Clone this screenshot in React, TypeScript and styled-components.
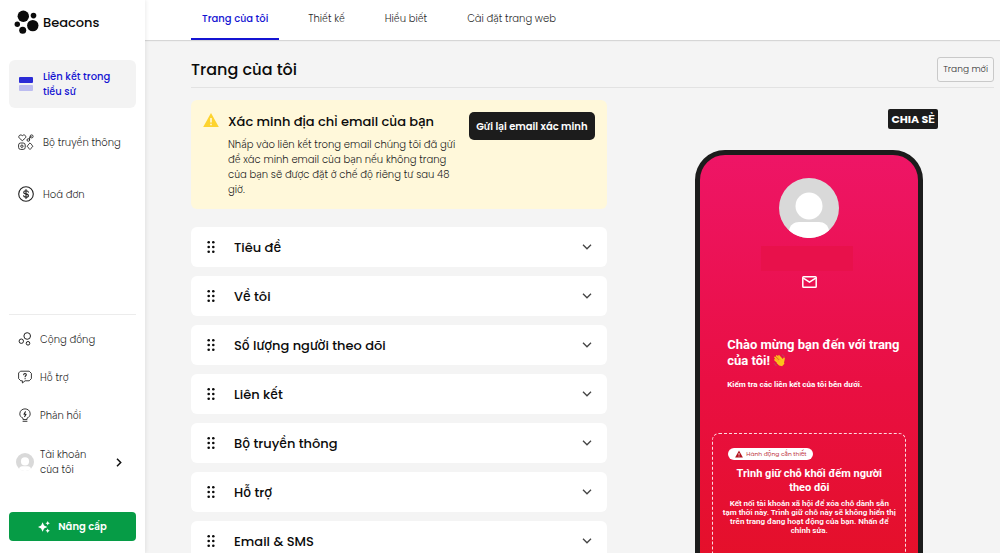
import React from "react";
import styled, { createGlobalStyle } from "styled-components";

const GlobalStyle = createGlobalStyle`
  *, *::before, *::after { box-sizing: border-box; }
  body {
    margin: 0;
    background: #f4f4f4;
    color: #0b0b0b;
    font-family: Poppins, Inter, "Noto Sans", sans-serif;
    font-size: 10px;
    line-height: 15px;
  }
  button { font: inherit; color: inherit; cursor: pointer; }
  a { color: inherit; text-decoration: none; }
  h1, h2, h3, p, ul { margin: 0; padding: 0; }
  svg { display: block; flex: none; }
`;

const Shell = styled.div`
  display: flex;
  height: 100vh;
  overflow: hidden;
`;

const Sidebar = styled.aside`
  position: relative;
  z-index: 2;
  display: flex;
  flex: none;
  flex-direction: column;
  width: 145px;
  padding: 9px 9px 12px;
  background: #fff;
  box-shadow: 1px 0 4px rgba(0, 0, 0, 0.08);
`;

const Brand = styled.a`
  display: flex;
  align-items: center;
  gap: 4px;
  height: 26px;
  margin-bottom: 25px;
  padding-left: 5px;
  font-size: 13px;
  font-weight: 500;
`;

const PrimaryNav = styled.nav`
  display: flex;
  flex-direction: column;
`;

const NavItem = styled.a<{ $active?: boolean }>`
  display: flex;
  align-items: center;
  gap: 9px;
  width: 127px;
  height: ${(p) => (p.$active ? "48px" : "52px")};
  margin-bottom: ${(p) => (p.$active ? "8px" : "0")};
  padding: 0 9px;
  border-radius: 6px;
  background: ${(p) => (p.$active ? "#f3f3f3" : "transparent")};
  color: ${(p) => (p.$active ? "#1414d2" : "#2a2a2a")};
  font-weight: ${(p) => (p.$active ? 500 : 300)};
`;

const NavLabel = styled.span`
  flex: 1;
`;

const SecondaryNav = styled.nav`
  display: flex;
  flex-direction: column;
  width: 127px;
  margin-top: auto;
  margin-bottom: 22px;
  padding-top: 5px;
  border-top: 1px solid #ececec;
`;

const SubItem = styled.a<{ $tall?: boolean }>`
  display: flex;
  align-items: center;
  gap: 7px;
  height: ${(p) => (p.$tall ? "56px" : "38px")};
  padding: 0 14px 0 8px;
  color: #2a2a2a;
  font-weight: 300;
`;

const IconSlot = styled.span`
  display: flex;
  flex: none;
  align-items: center;
  justify-content: center;
  width: 16px;
`;

const UpgradeButton = styled.button`
  display: flex;
  align-items: center;
  justify-content: center;
  gap: 8px;
  width: 127px;
  height: 29px;
  border: 0;
  border-radius: 4px;
  background: #069c46;
  color: #fff;
  font-weight: 600;
`;

const Page = styled.div`
  display: flex;
  flex: 1;
  flex-direction: column;
  min-width: 0;
`;

const TabBar = styled.nav`
  display: flex;
  flex: none;
  gap: 18px;
  height: 40px;
  padding-left: 46px;
  background: #fff;
  box-shadow: 0 1px 1px rgba(0, 0, 0, 0.12);
`;

const Tab = styled.a<{ $active?: boolean }>`
  display: flex;
  align-items: center;
  padding: 0 11px 2px;
  border-bottom: 2px solid ${(p) => (p.$active ? "#1414d2" : "transparent")};
  color: ${(p) => (p.$active ? "#1414d2" : "#2a2a2a")};
  font-weight: ${(p) => (p.$active ? 500 : 300)};
`;

const Content = styled.main`
  flex: 1;
  padding: 17px 6px 0 46px;
  overflow: hidden;
`;

const TitleRow = styled.header`
  display: flex;
  align-items: center;
  justify-content: space-between;
  height: 31px;
  padding-bottom: 5px;
  border-bottom: 1px solid #e2e2e2;
`;

const PageTitle = styled.h1`
  font-size: 16px;
  font-weight: 500;
  line-height: 24px;
`;

const NewPageButton = styled.button`
  height: 25px;
  padding: 0 5px;
  border: 1px solid #c9c9c9;
  border-radius: 3px;
  background: #f6f6f6;
  color: #333;
  font-size: 9px;
  font-weight: 300;
`;

const Columns = styled.div`
  display: grid;
  grid-template-columns: 9fr 8fr;
  gap: 18px;
  padding-top: 12px;
`;

const Notice = styled.section`
  display: flex;
  align-items: flex-start;
  gap: 9px;
  min-height: 109px;
  margin-bottom: 18px;
  padding: 12px 12px 10px;
  border-radius: 6px;
  background: #fff8da;
`;

const NoticeText = styled.div`
  flex: 1;
  min-width: 0;
`;

const NoticeTitle = styled.h2`
  margin-bottom: 5px;
  font-size: 13px;
  font-weight: 500;
  line-height: 20px;
  white-space: nowrap;
`;

const NoticeBody = styled.p`
  max-width: 230px;
  color: #222;
  font-weight: 300;
`;

const ResendButton = styled.button`
  flex: none;
  height: 28px;
  padding: 0 7px;
  border: 0;
  border-radius: 5px;
  background: #1c1c1c;
  color: #fff;
  font-weight: 600;
`;

const BlockList = styled.ul`
  display: flex;
  flex-direction: column;
  gap: 9px;
  list-style: none;
`;

const BlockButton = styled.button`
  display: flex;
  align-items: center;
  width: 100%;
  height: 40px;
  padding: 0 15px;
  border: 0;
  border-radius: 6px;
  background: #fff;
  text-align: left;
`;

const BlockLabel = styled.span`
  flex: 1;
  padding-left: 18px;
  font-size: 13px;
  font-weight: 500;
`;

const Preview = styled.section`
  display: flex;
  flex-direction: column;
  align-items: center;
  padding-top: 9px;
`;

const ShareButton = styled.button`
  align-self: flex-end;
  height: 20px;
  margin: 0 56px 21px 0;
  padding: 0 3px;
  border: 0;
  border-radius: 2px;
  background: #1c1c1c;
  color: #fff;
  font-size: 11px;
  font-weight: 700;
`;

const Phone = styled.div`
  display: flex;
  flex-direction: column;
  align-items: center;
  width: 228px;
  min-height: 470px;
  padding: 23px 12px 0;
  border: 5px solid #1c1c1c;
  border-radius: 30px;
  background: linear-gradient(#ee1566, #e90f42 50%, #e31022);
  color: #fff;
  font-family: Roboto, sans-serif;
`;

const NamePlate = styled.div`
  width: 92px;
  height: 25px;
  margin: 8px 4px 5px 0;
  background: #e8114b;
`;

const Welcome = styled.div`
  align-self: stretch;
  margin: 49px 0 42px;
  padding: 0 4px 0 15px;
`;

const WelcomeTitle = styled.h2`
  margin-bottom: 10px;
  font-size: 13px;
  font-weight: 700;
  line-height: 16px;

  svg { display: inline-block; vertical-align: -2px; }
`;

const WelcomeText = styled.p`
  font-size: 8px;
  font-weight: 700;
  line-height: 12px;
`;

const Placeholder = styled.div`
  align-self: stretch;
  flex: 1;
  padding: 14px 9px;
  border: 1px dashed rgba(255, 255, 255, 0.85);
  border-radius: 7px;
  text-align: center;
`;

const ActionBadge = styled.span`
  display: flex;
  align-items: center;
  gap: 3px;
  width: fit-content;
  height: 12px;
  margin: 0 0 7px 6px;
  padding: 0 6px 0 7px;
  border-radius: 6px;
  background: #fff;
  color: #c0353f;
  font-family: Poppins, Inter, sans-serif;
  font-size: 6px;
  font-weight: 400;
`;

const PlaceholderTitle = styled.h3`
  margin-bottom: 4px;
  padding: 0 6px;
  font-size: 11px;
  font-weight: 700;
  line-height: 14px;
`;

const PlaceholderText = styled.p`
  font-size: 8px;
  font-weight: 600;
  line-height: 9px;
`;

const LogoIcon = () => (
  <svg width="25" height="26" viewBox="0 0 25 26" fill="#0b0b0b">
    <circle cx="9.3" cy="7.3" r="5.7" />
    <circle cx="19.5" cy="6.6" r="2.8" />
    <circle cx="3.3" cy="15.2" r="2.7" />
    <circle cx="18.8" cy="16.6" r="5.7" />
    <circle cx="8.7" cy="21.2" r="3.5" />
  </svg>
);

const BioIcon = () => (
  <svg width="16" height="16" viewBox="0 0 16 16">
    <rect x="1" y="1" width="14" height="6" rx="1" fill="#2b2bd6" />
    <rect x="1" y="9" width="14" height="6" rx="1" fill="#bcbcf0" />
  </svg>
);

const MediaKitIcon = () => (
  <svg width="16" height="16" viewBox="0 0 16 16" fill="none" stroke="#222" strokeWidth="0.9" strokeLinejoin="round">
    <path d="M4.300 6.700 1.300 4.100C-.4 2.400 2.300-.5 4.300 1.700 6.300-.5 9 2.400 7.300 4.100Z" />
    <circle cx="10.300" cy="6" r="1.300" />
    <path d="M11.600 6V3.200l2-.8" />
    <circle cx="13.600" cy="2.400" r="1.500" />
    <rect x=".6" y="9" width="6.600" height="6.400" rx="2" />
    <circle cx="3.900" cy="12.200" r="1.200" />
    <path d="M12 8.900 13.300 10.200C13.600 11 14.200 11.400 14.900 12.200 14.200 13 13.600 13.400 13.300 14.200L12 15.500 10.700 14.200C10.400 13.400 9.800 13 9.100 12.200 9.800 11.400 10.400 11 10.700 10.200Z" />
  </svg>
);

const DollarIcon = () => (
  <svg width="16" height="16" viewBox="0 0 16 16" fill="none" stroke="#222" strokeWidth="1.100" strokeLinecap="round">
    <circle cx="8" cy="8" r="7.300" />
    <path d="M10.400 6.100C10.100 5 9.200 4.700 8 4.700c-3 0-3.100 2.900-.3 3.200 3.700.3 3.400 3.400.3 3.400-1.300 0-2.300-.5-2.500-1.600M8 3.500v9" />
  </svg>
);

const CommunityIcon = () => (
  <svg width="14" height="14" viewBox="0 0 14 14" fill="none" stroke="#222" strokeWidth="1">
    <circle cx="9.200" cy="4" r="3.300" />
    <circle cx="3.300" cy="9.200" r="2.200" />
    <circle cx="10" cy="11.300" r="1.800" />
  </svg>
);

const SupportIcon = () => (
  <svg width="14" height="14" viewBox="0 0 14 14" fill="none" stroke="#222" strokeWidth="0.900" strokeLinejoin="round" strokeLinecap="round">
    <path d="M2.800 1.200h8.400l2.200 2.200v5.200l-2.200 2.200H7.100L4.400 13v-2.200H2.800L.6 8.600V3.400Z" />
    <path d="M5.700 4.700c.1-1.600 2.600-1.500 2.600.1 0 .9-1.200 1-1.200 2M7.100 8.600v.1" strokeWidth="1.100" />
  </svg>
);

const FeedbackIcon = () => (
  <svg width="14" height="14" viewBox="0 0 14 14" fill="none" stroke="#222" strokeWidth="0.900" strokeLinejoin="round" strokeLinecap="round">
    <path d="M5 11.200v-1c-2-.8-3.200-2.500-3.200-4.300 0-6.700 10.400-6.700 10.400 0 0 1.800-1.200 3.500-3.200 4.300v1ZM5 13.300h4" />
    <path d="M7.400 3.800 6 6.300h2L6.700 8.600" strokeWidth="1.100" />
  </svg>
);

const Avatar = ({ size }: { size: number }) => (
  <svg width={size} height={size} viewBox="0 0 60 60">
    <circle cx="30" cy="30" r="30" fill="#d9d9d9" />
    <circle cx="30" cy="28" r="13.500" fill="#fff" />
    <path d="M10 52.400C11 47 15 44 20 44h20c5 0 9 3 10 8.400A30 30 0 0 1 10 52.400Z" fill="#fff" />
  </svg>
);

const ChevronRight = () => (
  <svg width="6" height="9" viewBox="0 0 6 9" fill="none" stroke="#111" strokeWidth="1.500">
    <path d="m1 .8 3.700 3.700L1 8.200" />
  </svg>
);

const ChevronDown = () => (
  <svg width="10" height="6" viewBox="0 0 10 6" fill="none" stroke="#444" strokeWidth="1.300">
    <path d="m1 .8 4 4 4-4" />
  </svg>
);

const SparkleIcon = () => (
  <svg width="12" height="12" viewBox="0 0 12 12" fill="#fff">
    <path d="M4.600 1.200 6.100 4.500 9.400 6 6.100 7.500 4.600 10.800 3.100 7.500-.2 6 3.100 4.500ZM9.700 0l.7 1.500 1.500.7-1.500.7-.7 1.500-.7-1.500-1.500-.7 1.500-.7ZM9.700 7.600l.7 1.500 1.500.7-1.500.7-.7 1.500-.7-1.500-1.500-.7 1.500-.7Z" />
  </svg>
);

const WarningIcon = () => (
  <svg width="16" height="16" viewBox="0 0 16 16">
    <path d="M8 1 15.800 15H.2Z" fill="#fdd32f" />
    <path d="M7.200 6h1.600v4.500H7.200ZM7.200 11.700h1.600v1.600H7.200Z" fill="#fff8da" />
  </svg>
);

const AlertIcon = () => (
  <svg width="8" height="8" viewBox="0 0 8 8">
    <path d="M4 .5 7.900 7.500H.1Z" fill="#b3121e" />
    <path d="M3.600 3h.8v2.200h-.8ZM3.600 5.800h.8v.8h-.8Z" fill="#fff" />
  </svg>
);

const DragIcon = () => (
  <svg width="10" height="12" viewBox="0 0 10 12" fill="#0b0b0b">
    {[1.300, 6, 10.700].map((y) => (
      <React.Fragment key={y}>
        <circle cx="2.700" cy={y} r="1.300" />
        <circle cx="7.300" cy={y} r="1.300" />
      </React.Fragment>
    ))}
  </svg>
);

const MailIcon = () => (
  <svg width="15" height="12" viewBox="0 0 15 12" fill="none" stroke="#fff" strokeWidth="1.500" strokeLinejoin="round">
    <rect x=".8" y=".8" width="13.400" height="10.400" rx=".8" />
    <path d="m1.300 2.200 6.200 4 6.200-4" />
  </svg>
);

const WaveIcon = () => (
  <svg width="13" height="13" viewBox="0 0 13 13" fill="none" strokeLinecap="round">
    <path d="M5.500 6.200 9 5.200l1.600 1.300.8 3.200-2.300 2.500-3-.6-2.500-2.700Z" fill="#fcc21b" />
    <path d="M2 5.800 6.500 10M2 3.400l5.400 5.200M3.700 2l5.200 5.300M6 2l4 4.500M10.400 7.700 11 4.300" stroke="#fcc21b" strokeWidth="1.700" />
    <path d="M3.400 4.900 6 7.400M5 3.500 7.500 6" stroke="#d98f12" strokeWidth=".4" />
    <path d="M1.200 9.500c.4 1 1 1.600 2 2M9.300 1c1 .3 1.500.8 1.900 1.700" stroke="#9f6573" strokeWidth=".7" />
  </svg>
);

const tabs = ["Trang của tôi", "Thiết kế", "Hiểu biết", "Cài đặt trang web"];

const blocks = [
  "Tiêu đề",
  "Về tôi",
  "Số lượng người theo dõi",
  "Liên kết",
  "Bộ truyền thông",
  "Hỗ trợ",
  "Email & SMS",
];

export default function App() {
  return (
    <>
      <GlobalStyle />
      <Shell>
        <Sidebar>
          <Brand href="#">
            <LogoIcon />
            Beacons
          </Brand>
          <PrimaryNav>
            <NavItem href="#" $active>
              <IconSlot><BioIcon /></IconSlot>
              <NavLabel>Liên kết trong tiểu sử</NavLabel>
            </NavItem>
            <NavItem href="#">
              <IconSlot><MediaKitIcon /></IconSlot>
              <NavLabel>Bộ truyền thông</NavLabel>
            </NavItem>
            <NavItem href="#">
              <IconSlot><DollarIcon /></IconSlot>
              <NavLabel>Hoá đơn</NavLabel>
            </NavItem>
          </PrimaryNav>
          <SecondaryNav>
            <SubItem href="#">
              <IconSlot><CommunityIcon /></IconSlot>
              <NavLabel>Cộng đồng</NavLabel>
            </SubItem>
            <SubItem href="#">
              <IconSlot><SupportIcon /></IconSlot>
              <NavLabel>Hỗ trợ</NavLabel>
            </SubItem>
            <SubItem href="#">
              <IconSlot><FeedbackIcon /></IconSlot>
              <NavLabel>Phản hồi</NavLabel>
            </SubItem>
            <SubItem href="#" $tall>
              <IconSlot><Avatar size={18} /></IconSlot>
              <NavLabel>Tài khoản<br />của tôi</NavLabel>
              <ChevronRight />
            </SubItem>
          </SecondaryNav>
          <UpgradeButton type="button">
            <SparkleIcon />
            Nâng cấp
          </UpgradeButton>
        </Sidebar>
        <Page>
          <TabBar>
            {tabs.map((tab, i) => (
              <Tab key={tab} href="#" $active={i === 0}>{tab}</Tab>
            ))}
          </TabBar>
          <Content>
            <TitleRow>
              <PageTitle>Trang của tôi</PageTitle>
              <NewPageButton type="button">Trang mới</NewPageButton>
            </TitleRow>
            <Columns>
              <div>
                <Notice>
                  <WarningIcon />
                  <NoticeText>
                    <NoticeTitle>Xác minh địa chỉ email của bạn</NoticeTitle>
                    <NoticeBody>
                      Nhấp vào liên kết trong email chúng tôi đã gửi để xác minh email của bạn nếu không
                      trang của bạn sẽ được đặt ở chế độ riêng tư sau 48 giờ.
                    </NoticeBody>
                  </NoticeText>
                  <ResendButton type="button">Gửi lại email xác minh</ResendButton>
                </Notice>
                <BlockList>
                  {blocks.map((label) => (
                    <li key={label}>
                      <BlockButton type="button">
                        <DragIcon />
                        <BlockLabel>{label}</BlockLabel>
                        <ChevronDown />
                      </BlockButton>
                    </li>
                  ))}
                </BlockList>
              </div>
              <Preview>
                <ShareButton type="button">CHIA SẺ</ShareButton>
                <Phone>
                  <Avatar size={60} />
                  <NamePlate />
                  <MailIcon />
                  <Welcome>
                    <WelcomeTitle>
                      Chào mừng bạn đến với trang của tôi! <WaveIcon />
                    </WelcomeTitle>
                    <WelcomeText>Kiểm tra các liên kết của tôi bên dưới.</WelcomeText>
                  </Welcome>
                  <Placeholder>
                    <ActionBadge>
                      <AlertIcon />
                      Hành động cần thiết
                    </ActionBadge>
                    <PlaceholderTitle>Trình giữ chỗ khối đếm người theo dõi</PlaceholderTitle>
                    <PlaceholderText>
                      Kết nối tài khoản xã hội để xóa chỗ dành sẵn tạm thời này. Trình giữ chỗ này sẽ
                      không hiển thị trên trang đang hoạt động của bạn. Nhấn để chỉnh sửa.
                    </PlaceholderText>
                  </Placeholder>
                </Phone>
              </Preview>
            </Columns>
          </Content>
        </Page>
      </Shell>
    </>
  );
}
